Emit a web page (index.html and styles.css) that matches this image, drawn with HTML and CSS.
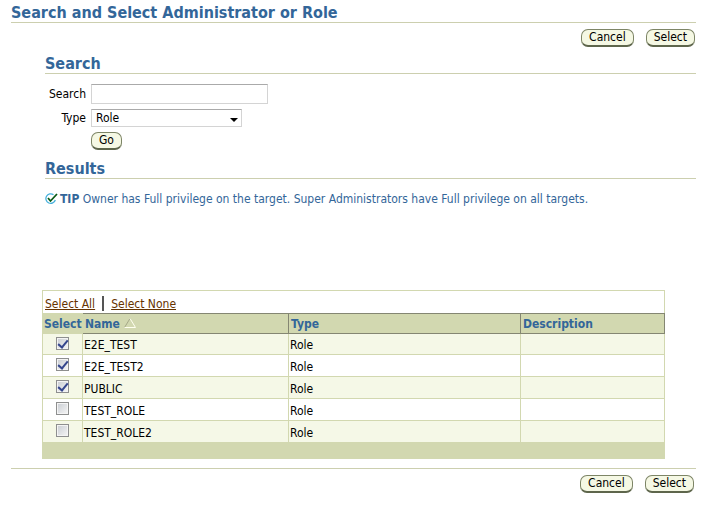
FILE: index.html
```html
<!DOCTYPE html>
<html lang="en">
<head>
    <meta charset="UTF-8">
    <meta name="viewport" content="width=device-width, initial-scale=1.0">
    <title>Search and Select Administrator or Role</title>
    <link rel="stylesheet" href="styles.css">
</head>
<body>
    <div class="container">
        <h1>Search and Select Administrator or Role</h1>
        <div class="btn-row">
            <button type="button" class="btn">Cancel</button>
            <button type="button" class="btn">Select</button>
        </div>
        <section class="section">
            <h2>Search</h2>
            <form class="search-form">
                <label for="search">Search</label>
                <input type="text" id="search">
                <label for="type">Type</label>
                <div class="select-box">
                    <select id="type">
                        <option>Role</option>
                    </select>
                    <svg class="arrow" width="8" height="4" viewBox="0 0 8 4"><path d="M0 0h8L4 4z"/></svg>
                </div>
                <button type="button" class="btn btn-go">Go</button>
            </form>
        </section>
        <section class="section results">
            <h2>Results</h2>
            <p class="tip">
                <svg width="13" height="13" viewBox="0 0 13 13" fill="none">
                    <path d="M8.500 1.700A4.800 4.800 0 1 0 10.300 7" stroke="#45b0dc" stroke-width="1.300"/>
                    <path d="M3 5L5.500 8L12 1" stroke="#0b5a14" stroke-width="1.800"/>
                </svg>
                <span><b>TIP</b> Owner has Full privilege on the target. Super Administrators have Full privilege on all targets.</span>
            </p>
            <div class="list">
                <div class="list-links">
                    <a href="#">Select All</a>
                    <span class="bar"></span>
                    <a href="#">Select None</a>
                </div>
                <table>
                    <thead>
                        <tr>
                            <th class="col-select">Select</th>
                            <th class="col-name">Name <svg width="12" height="10" viewBox="0 0 12 10" fill="none"><path d="M.5 9.500L6 .5" stroke="#a5a888"/><path d="M6 .5L11.500 9.500H.5" stroke="#fffff0"/></svg></th>
                            <th class="col-type">Type</th>
                            <th>Description</th>
                        </tr>
                    </thead>
                    <tbody>
                        <tr>
                            <td><input type="checkbox" aria-label="E2E_TEST" checked></td>
                            <td>E2E_TEST</td>
                            <td>Role</td>
                            <td></td>
                        </tr>
                        <tr>
                            <td><input type="checkbox" aria-label="E2E_TEST2" checked></td>
                            <td>E2E_TEST2</td>
                            <td>Role</td>
                            <td></td>
                        </tr>
                        <tr>
                            <td><input type="checkbox" aria-label="PUBLIC" checked></td>
                            <td>PUBLIC</td>
                            <td>Role</td>
                            <td></td>
                        </tr>
                        <tr>
                            <td><input type="checkbox" aria-label="TEST_ROLE"></td>
                            <td>TEST_ROLE</td>
                            <td>Role</td>
                            <td></td>
                        </tr>
                        <tr>
                            <td><input type="checkbox" aria-label="TEST_ROLE2"></td>
                            <td>TEST_ROLE2</td>
                            <td>Role</td>
                            <td></td>
                        </tr>
                    </tbody>
                </table>
                <div class="list-foot"></div>
            </div>
        </section>
        <div class="btn-row bottom">
            <button type="button" class="btn">Cancel</button>
            <button type="button" class="btn">Select</button>
        </div>
    </div>
</body>
</html>
```
FILE: styles.css
```css
*{margin: 0;padding: 0;box-sizing: border-box}
body{background: #fff;color: #000;font: 12px/16px Tahoma, "DejaVu Sans Condensed", "Noto Sans", sans-serif;}
input,select,button{font: inherit;color: inherit;}
.container{padding: 4px 5px 0 11px;}
h1,h2{font-size: 16px;line-height: 18px;color: #336699;border-bottom: 1px solid #cccfaf;}
.btn-row{display: flex;justify-content: flex-end;gap: 12px;padding: 6px 1px 0 0;}
.btn{height: 18px;padding: 0 7px;line-height: 15px;background: #f5f8e4;border: 1px solid #7d8566;border-bottom: 2px solid #5e664c;border-radius: 7px;}
.section{margin-left: 34px;padding-top: 8px;}
.search-form{display: grid;grid-template-columns: 41px 177px;column-gap: 5px;row-gap: 5px;align-items: center;padding-top: 10px;}
.search-form label{text-align: right;}
#search{width: 100%;height: 20px;padding: 0 4px;border: 1px solid #d4d4d4;border-top-color: #aaa;}
.select-box{position: relative;width: 151px;height: 18px;}
#type{width: 100%;height: 18px;padding: 0 4px;appearance: none;background: #fff;border: 1px solid #d4d4d4;border-top-color: #aaa;}
.arrow{position: absolute;right: 4px;top: 9px;pointer-events: none;}
.btn-go{grid-column: 2;justify-self: start;}
.tip{display: flex;align-items: center;gap: 2px;padding-top: 12px;color: #336699;white-space: nowrap;}
.results{padding-top: 10px;}
.list{margin: 83px 31px 0 -3px;}
.list-links{display: flex;align-items: center;gap: 7px;height: 23px;padding: 3px 0 0 2px;border: 1px solid #d2d8b0;border-bottom: 0;}
.list-links a{color: #663300;}
.bar{width: 2px;height: 15px;background: #555;}
table{width: 100%;border-collapse: collapse;table-layout: fixed;}
th{height: 20px;padding: 1px 2px 0;text-align: left;color: #336699;background: #d2d8b0;border: 1px solid #848672;white-space: nowrap;}
th.col-select{width: 40px;padding: 1px 1px 0;border-color: #d2d8b0;}
.col-name{width: 206px;}
.col-type{width: 232px;}
td{height: 22px;padding: 2px 1px 0;border: 1px solid #d2d8b0;}
tbody tr:first-child td{height: 21px;}
tbody tr:nth-child(odd){background: #f5f8e7;}
td:first-child{padding: 0;text-align: center;}
td input{display: block;width: 13px;height: 13px;margin: 0 auto 2px;appearance: none;border: 1px solid #8e8f8f;background: linear-gradient(135deg, #c8ccd2, #f6f6f6);box-shadow: inset 0 0 0 1px #f4f4f4;}
td input:checked::before{content: "";display: block;width: 4px;height: 8px;margin: 0 auto;border: solid #34458c;border-width: 0 2px 2px 0;transform: rotate(40deg);}
.list-foot{height: 16px;background: #d2d8b0;}
.bottom{margin-top: 9px;border-top: 1px solid #cccfaf;padding-right: 2px;}
```
